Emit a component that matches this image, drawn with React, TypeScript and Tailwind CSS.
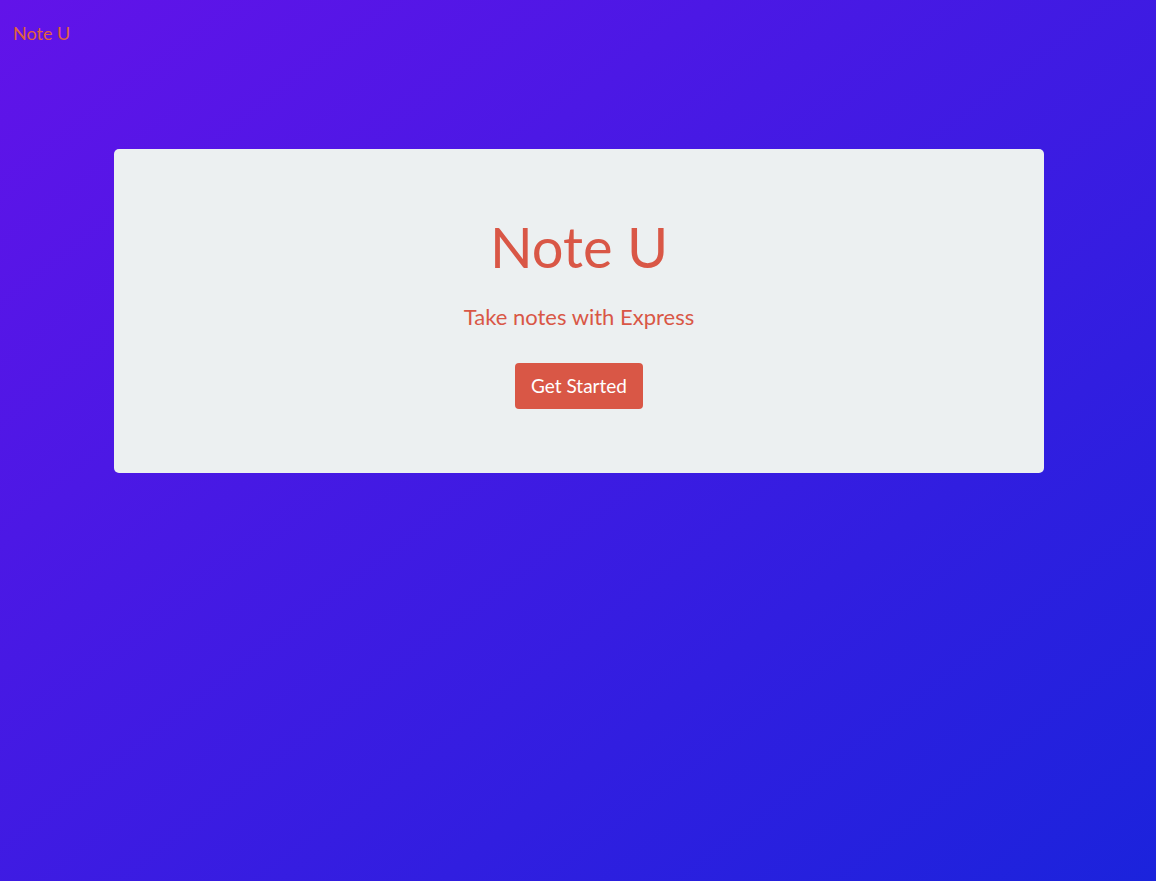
export default function App() {
  return (
    <div
      className="min-h-[881px] w-full bg-[linear-gradient(to_bottom_right,#6213e9,#1b23dc)]"
      style={{ fontFamily: "Lato, 'Open Sans', sans-serif" }}
    >
      <nav className="px-[13px] pt-[21px] pb-[8px]">
        <span className="text-[18px] leading-[24px] text-[#e0633c]">Note U</span>
      </nav>
      <div className="pl-[114px] pr-[112px] pt-[95px]">
        <div className="flex w-[930px] flex-col items-center rounded-[5px] bg-[#ecf0f1] pt-[64px] pb-[64px]">
          <h1 className="text-[56px] leading-[67px] font-normal text-[#d95746]">Note U</h1>
          <p className="mt-[20px] text-[22px] leading-[33px] text-[#d95746]">Take notes with Express</p>
          <button className="mt-[30px] rounded-[4px] bg-[#d95746] px-[16px] py-[8px] text-[19px] leading-[30px] text-white">
            Get Started
          </button>
        </div>
      </div>
    </div>
  );
}
